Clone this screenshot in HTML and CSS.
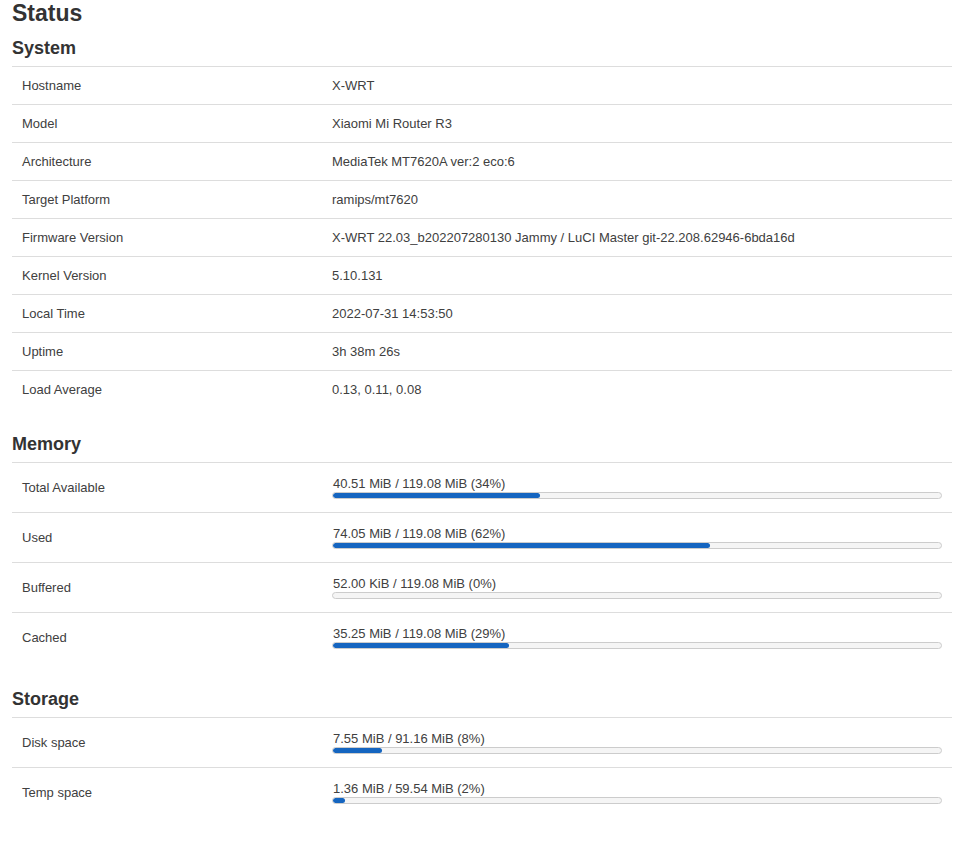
FILE: index.html
```html
<!DOCTYPE html>
<html>
<head>
<meta charset="utf-8">
<link rel="stylesheet" href="styles.css">
</head>
<body>
<div class="page">
  <h1 class="title">Status</h1>

  <h2 class="section-title">System</h2>
  <table class="info">
    <tr><td class="label">Hostname</td><td class="value">X-WRT</td></tr>
    <tr><td class="label">Model</td><td class="value">Xiaomi Mi Router R3</td></tr>
    <tr><td class="label">Architecture</td><td class="value">MediaTek MT7620A ver:2 eco:6</td></tr>
    <tr><td class="label">Target Platform</td><td class="value">ramips/mt7620</td></tr>
    <tr><td class="label">Firmware Version</td><td class="value">X-WRT 22.03_b202207280130 Jammy / LuCI Master git-22.208.62946-6bda16d</td></tr>
    <tr><td class="label">Kernel Version</td><td class="value">5.10.131</td></tr>
    <tr><td class="label">Local Time</td><td class="value">2022-07-31 14:53:50</td></tr>
    <tr><td class="label">Uptime</td><td class="value">3h 38m 26s</td></tr>
    <tr><td class="label">Load Average</td><td class="value">0.13, 0.11, 0.08</td></tr>
  </table>

  <h2 class="section-title">Memory</h2>
  <table class="info bars">
    <tr><td class="label">Total Available</td><td class="value"><div class="bar-text">40.51 MiB / 119.08 MiB (34%)</div><div class="bar"><div class="fill" style="width:34%"></div></div></td></tr>
    <tr><td class="label">Used</td><td class="value"><div class="bar-text">74.05 MiB / 119.08 MiB (62%)</div><div class="bar"><div class="fill" style="width:62%"></div></div></td></tr>
    <tr><td class="label">Buffered</td><td class="value"><div class="bar-text">52.00 KiB / 119.08 MiB (0%)</div><div class="bar"><div class="fill" style="width:0%"></div></div></td></tr>
    <tr><td class="label">Cached</td><td class="value"><div class="bar-text">35.25 MiB / 119.08 MiB (29%)</div><div class="bar"><div class="fill" style="width:29%"></div></div></td></tr>
  </table>

  <h2 class="section-title">Storage</h2>
  <table class="info bars">
    <tr><td class="label">Disk space</td><td class="value"><div class="bar-text">7.55 MiB / 91.16 MiB (8%)</div><div class="bar"><div class="fill" style="width:8%"></div></div></td></tr>
    <tr><td class="label">Temp space</td><td class="value"><div class="bar-text">1.36 MiB / 59.54 MiB (2%)</div><div class="bar"><div class="fill" style="width:2%"></div></div></td></tr>
  </table>
</div>
</body>
</html>
```

FILE: styles.css
```css
html, body {
  margin: 0;
  padding: 0;
  background: #fff;
}
body {
  font-family: "Liberation Sans", Arial, sans-serif;
  font-size: 13px;
  color: #404040;
}
.page {
  padding: 0 14px 40px 12px;
}
.title {
  margin: 0;
  font-size: 23px;
  line-height: 26px;
  font-weight: bold;
  color: #333;
}
.section-title {
  margin: 11px 0 7px;
  font-size: 18px;
  line-height: 22px;
  font-weight: bold;
  color: #333;
}
.info + .section-title {
  margin-top: 25px;
}
.bars + .section-title {
  margin-top: 26px;
}
.info {
  width: 100%;
  border-collapse: collapse;
}
.info td {
  border-top: 1px solid #ddd;
  height: 37px;
  padding: 0 10px;
  vertical-align: middle;
}
.info td.label {
  width: 290px;
}
.bars td {
  height: 49px;
}
.bar-text {
  line-height: 15px;
  padding-left: 1px;
  margin-top: -1px;
}
.bar {
  margin-top: 1px;
  height: 5px;
  border: 1px solid #ccc;
  border-radius: 4px;
  background: #f5f5f5;
  overflow: hidden;
}
.fill {
  height: 100%;
  background: #1565c0;
  border-radius: 4px;
}
```
